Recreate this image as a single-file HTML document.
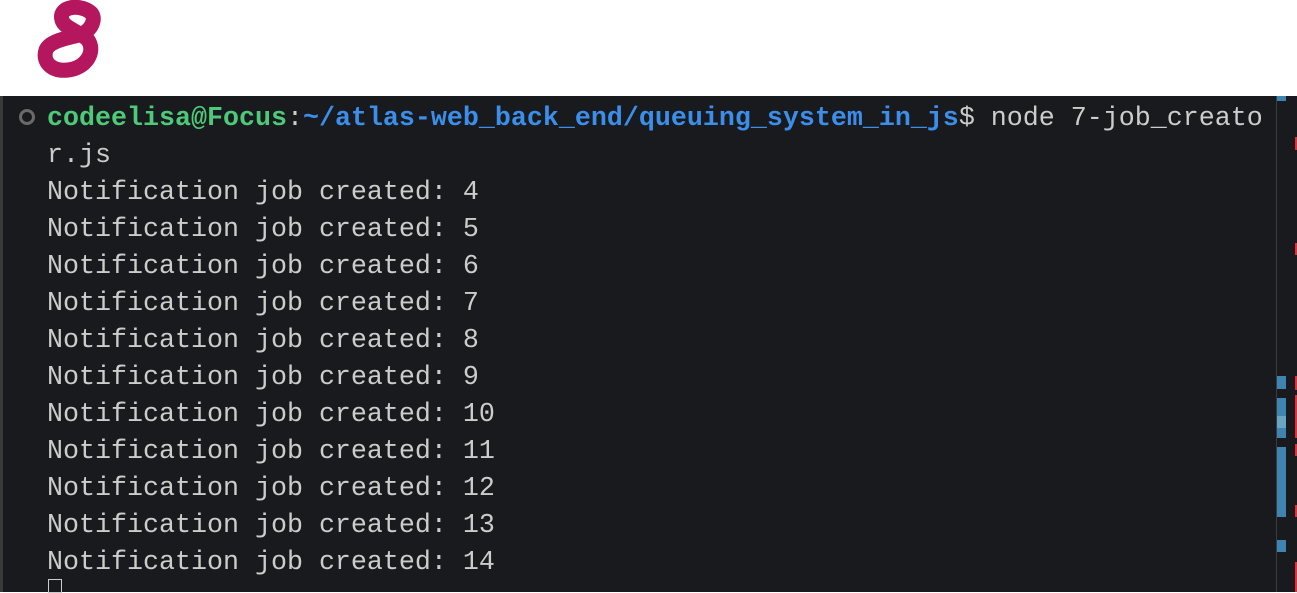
<!DOCTYPE html>
<html><head><meta charset="utf-8"><style>
html,body{margin:0;padding:0;width:1297px;height:592px;overflow:hidden;background:#fff;}
.term{position:absolute;left:0;top:96px;width:1297px;height:496px;background:#181a1d;}
.lb{position:absolute;left:0;top:96px;width:3px;height:496px;background:#3a3a3a;}
.sep{position:absolute;left:1276px;top:96px;width:1px;height:496px;background:#3a3c40;}
.txt{position:absolute;left:47px;top:101px;font-family:"Liberation Mono",monospace;font-size:26.67px;line-height:37px;color:#cccccc;white-space:pre;}
.g{color:#4ec97a;font-weight:bold}.b{color:#3b8eea;font-weight:bold}
.m{position:absolute;background:#3f84b0;left:1277px;width:9px;}
.r{position:absolute;background:#e0303a;left:1295px;width:2px;}
.dot{position:absolute;left:19px;top:109px;width:10px;height:10px;border:3px solid #6a6a6a;border-radius:50%;}
.cur{position:absolute;left:48px;top:579px;width:14px;height:14px;border:1.5px solid #ccc;box-sizing:border-box;}
</style></head><body>
<svg style="position:absolute;left:0;top:0" width="120" height="90" viewBox="0 0 120 90">
<path d="M90 12 C80 4 58 6 62 20 C64 28 80 32 88 40 C96 52 86 68 68 70 C52 72 42 62 46 50 C50 40 70 38 82 34 C94 28 96 16 90 12 Z" fill="none" stroke="#b5175f" stroke-width="15" stroke-linejoin="round"/>
</svg>
<div class="term"></div><div class="lb"></div><div class="sep"></div>
<div class="dot"></div>
<div class="txt"><span class="g">codeelisa@Focus</span>:<span class="b">~/atlas-web_back_end/queuing_system_in_js</span>$ node 7-job_creato
r.js
Notification job created: 4
Notification job created: 5
Notification job created: 6
Notification job created: 7
Notification job created: 8
Notification job created: 9
Notification job created: 10
Notification job created: 11
Notification job created: 12
Notification job created: 13
Notification job created: 14</div>
<div class="cur"></div>
<div class="m" style="top:96px;height:5px"></div>
<div class="m" style="top:376px;height:13px"></div>
<div class="m" style="top:398px;height:40px"></div>
<div class="m" style="top:416px;height:12px;background:#6aa3c3"></div>
<div class="m" style="top:447px;height:70px"></div>
<div class="m" style="top:540px;height:12px"></div>
<div class="r" style="top:137px;height:13px"></div>
<div class="r" style="top:243px;height:12px"></div>
<div class="r" style="top:376px;height:14px"></div>
<div class="r" style="top:395px;height:43px"></div>
<div class="r" style="top:444px;height:12px"></div>
<div class="r" style="top:505px;height:12px"></div>
<div class="r" style="top:562px;height:30px"></div>
</body></html>
